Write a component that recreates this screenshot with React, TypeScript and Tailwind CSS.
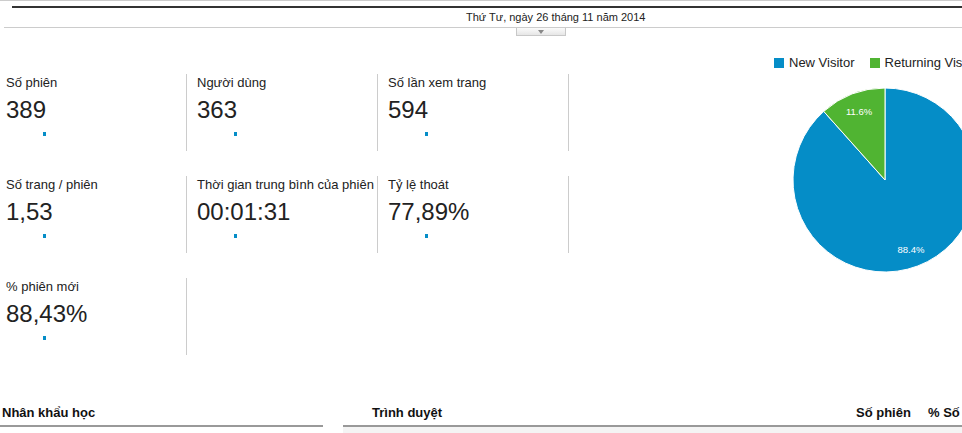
import React from "react";

type Metric = { label: string; value: string };

const rows: Metric[][] = [
  [
    { label: "Số phiên", value: "389" },
    { label: "Người dùng", value: "363" },
    { label: "Số lần xem trang", value: "594" },
  ],
  [
    { label: "Số trang / phiên", value: "1,53" },
    { label: "Thời gian trung bình của phiên", value: "00:01:31" },
    { label: "Tỷ lệ thoát", value: "77,89%" },
  ],
  [{ label: "% phiên mới", value: "88,43%" }],
];

function MetricCell({ m }: { m: Metric }) {
  return (
    <div className="w-[181px] h-[77px] border-r border-[#cccccc] shrink-0">
      <div className="text-[13px] leading-[17px] text-[#222222] whitespace-nowrap">{m.label}</div>
      <div className="mt-[5px] text-[24px] leading-[28px] text-[#222222] whitespace-nowrap">{m.value}</div>
      <div className="mt-[8px] ml-[37px] w-[3px] h-[4px] bg-[#058dc7]" />
    </div>
  );
}

function Pie() {
  const cx = 111;
  const cy = 100;
  const r = 92;
  const px = cx - 61.27;
  const py = cy - 68.62;
  return (
    <svg width="210" height="200" viewBox="0 0 210 200" className="overflow-visible block">
      <path
        d={`M ${cx} ${cy} L ${cx} ${cy - r} A ${r} ${r} 0 1 1 ${px} ${py} Z`}
        fill="#058dc7"
        stroke="#ffffff"
        strokeWidth="1"
      />
      <path
        d={`M ${cx} ${cy} L ${px} ${py} A ${r} ${r} 0 0 1 ${cx} ${cy - r} Z`}
        fill="#50b432"
        stroke="#ffffff"
        strokeWidth="1"
      />
      <text
        x="85"
        y="31"
        textAnchor="middle"
        dominantBaseline="central"
        fill="#ffffff"
        fontSize="9.5"
        fontFamily="'Liberation Sans', Arial, sans-serif"
      >
        11.6%
      </text>
      <text
        x="137"
        y="169"
        textAnchor="middle"
        dominantBaseline="central"
        fill="#ffffff"
        fontSize="9.5"
        fontFamily="'Liberation Sans', Arial, sans-serif"
      >
        88.4%
      </text>
    </svg>
  );
}

export default function App() {
  return (
    <div className="relative w-[962px] h-[433px] overflow-hidden bg-white font-['Liberation_Sans',Arial,sans-serif] text-[#222222]">
      {/* top lines */}
      <div className="h-px bg-[#cccccc]" />
      <div className="mt-[5px] ml-[12px] h-[2px] bg-[#333333]" />
      <div className="h-[19px] leading-[19px] text-[11px] pl-[466px] whitespace-nowrap text-[#222222]">
        Thứ Tư, ngày 26 tháng 11 năm 2014
      </div>
      <div className="ml-[4px] h-px bg-[#cccccc]" />
      <div className="ml-[516px] w-[50px] h-[8px] border border-t-0 border-[#c8c8c8] bg-gradient-to-b from-[#fbfbfb] to-[#e6e6e6] flex items-center justify-center">
        <div className="w-0 h-0 border-l-[3px] border-r-[3px] border-t-[4px] border-l-transparent border-r-transparent border-t-[#888888]" />
      </div>

      {/* main */}
      <div className="flex">
        <div className="w-[774px] shrink-0 pl-[6px] pt-[38px] flex flex-col gap-y-[25px]">
          {rows.map((row, i) => (
            <div key={i} className="flex gap-x-[10px]">
              {row.map((m) => (
                <MetricCell key={m.label} m={m} />
              ))}
            </div>
          ))}
        </div>
        <div className="shrink-0 w-[220px] flex flex-col">
          <div className="mt-[19px] flex items-center text-[13px] leading-[15px] whitespace-nowrap text-[#222222]">
            <span className="w-[10px] h-[10px] bg-[#058dc7] shrink-0" />
            <span className="ml-[5px]">New Visitor</span>
            <span className="ml-[15px] w-[10px] h-[10px] bg-[#50b432] shrink-0" />
            <span className="ml-[5px]">Returning Visitor</span>
          </div>
          <div className="mt-[10px]">
            <Pie />
          </div>
        </div>
      </div>

      {/* bottom */}
      <div className="mt-[50px] flex gap-x-[20px]">
        <div className="w-[323px] shrink-0">
          <div className="pl-[2px] pb-[5px] border-b-2 border-[#999999] text-[13px] leading-[15px] font-bold whitespace-nowrap text-[#111111]">
            Nhân khẩu học
          </div>
        </div>
        <div className="w-[700px] shrink-0">
          <div className="pl-[29px] pb-[5px] border-b-2 border-[#999999] flex text-[13px] leading-[15px] font-bold whitespace-nowrap text-[#111111]">
            <span className="w-[484px] shrink-0">Trình duyệt</span>
            <span className="w-[72px] shrink-0">Số phiên</span>
            <span className="shrink-0">% Số phiên</span>
          </div>
          <div className="h-[10px] bg-[#f4f4f4]" />
        </div>
      </div>
    </div>
  );
}
